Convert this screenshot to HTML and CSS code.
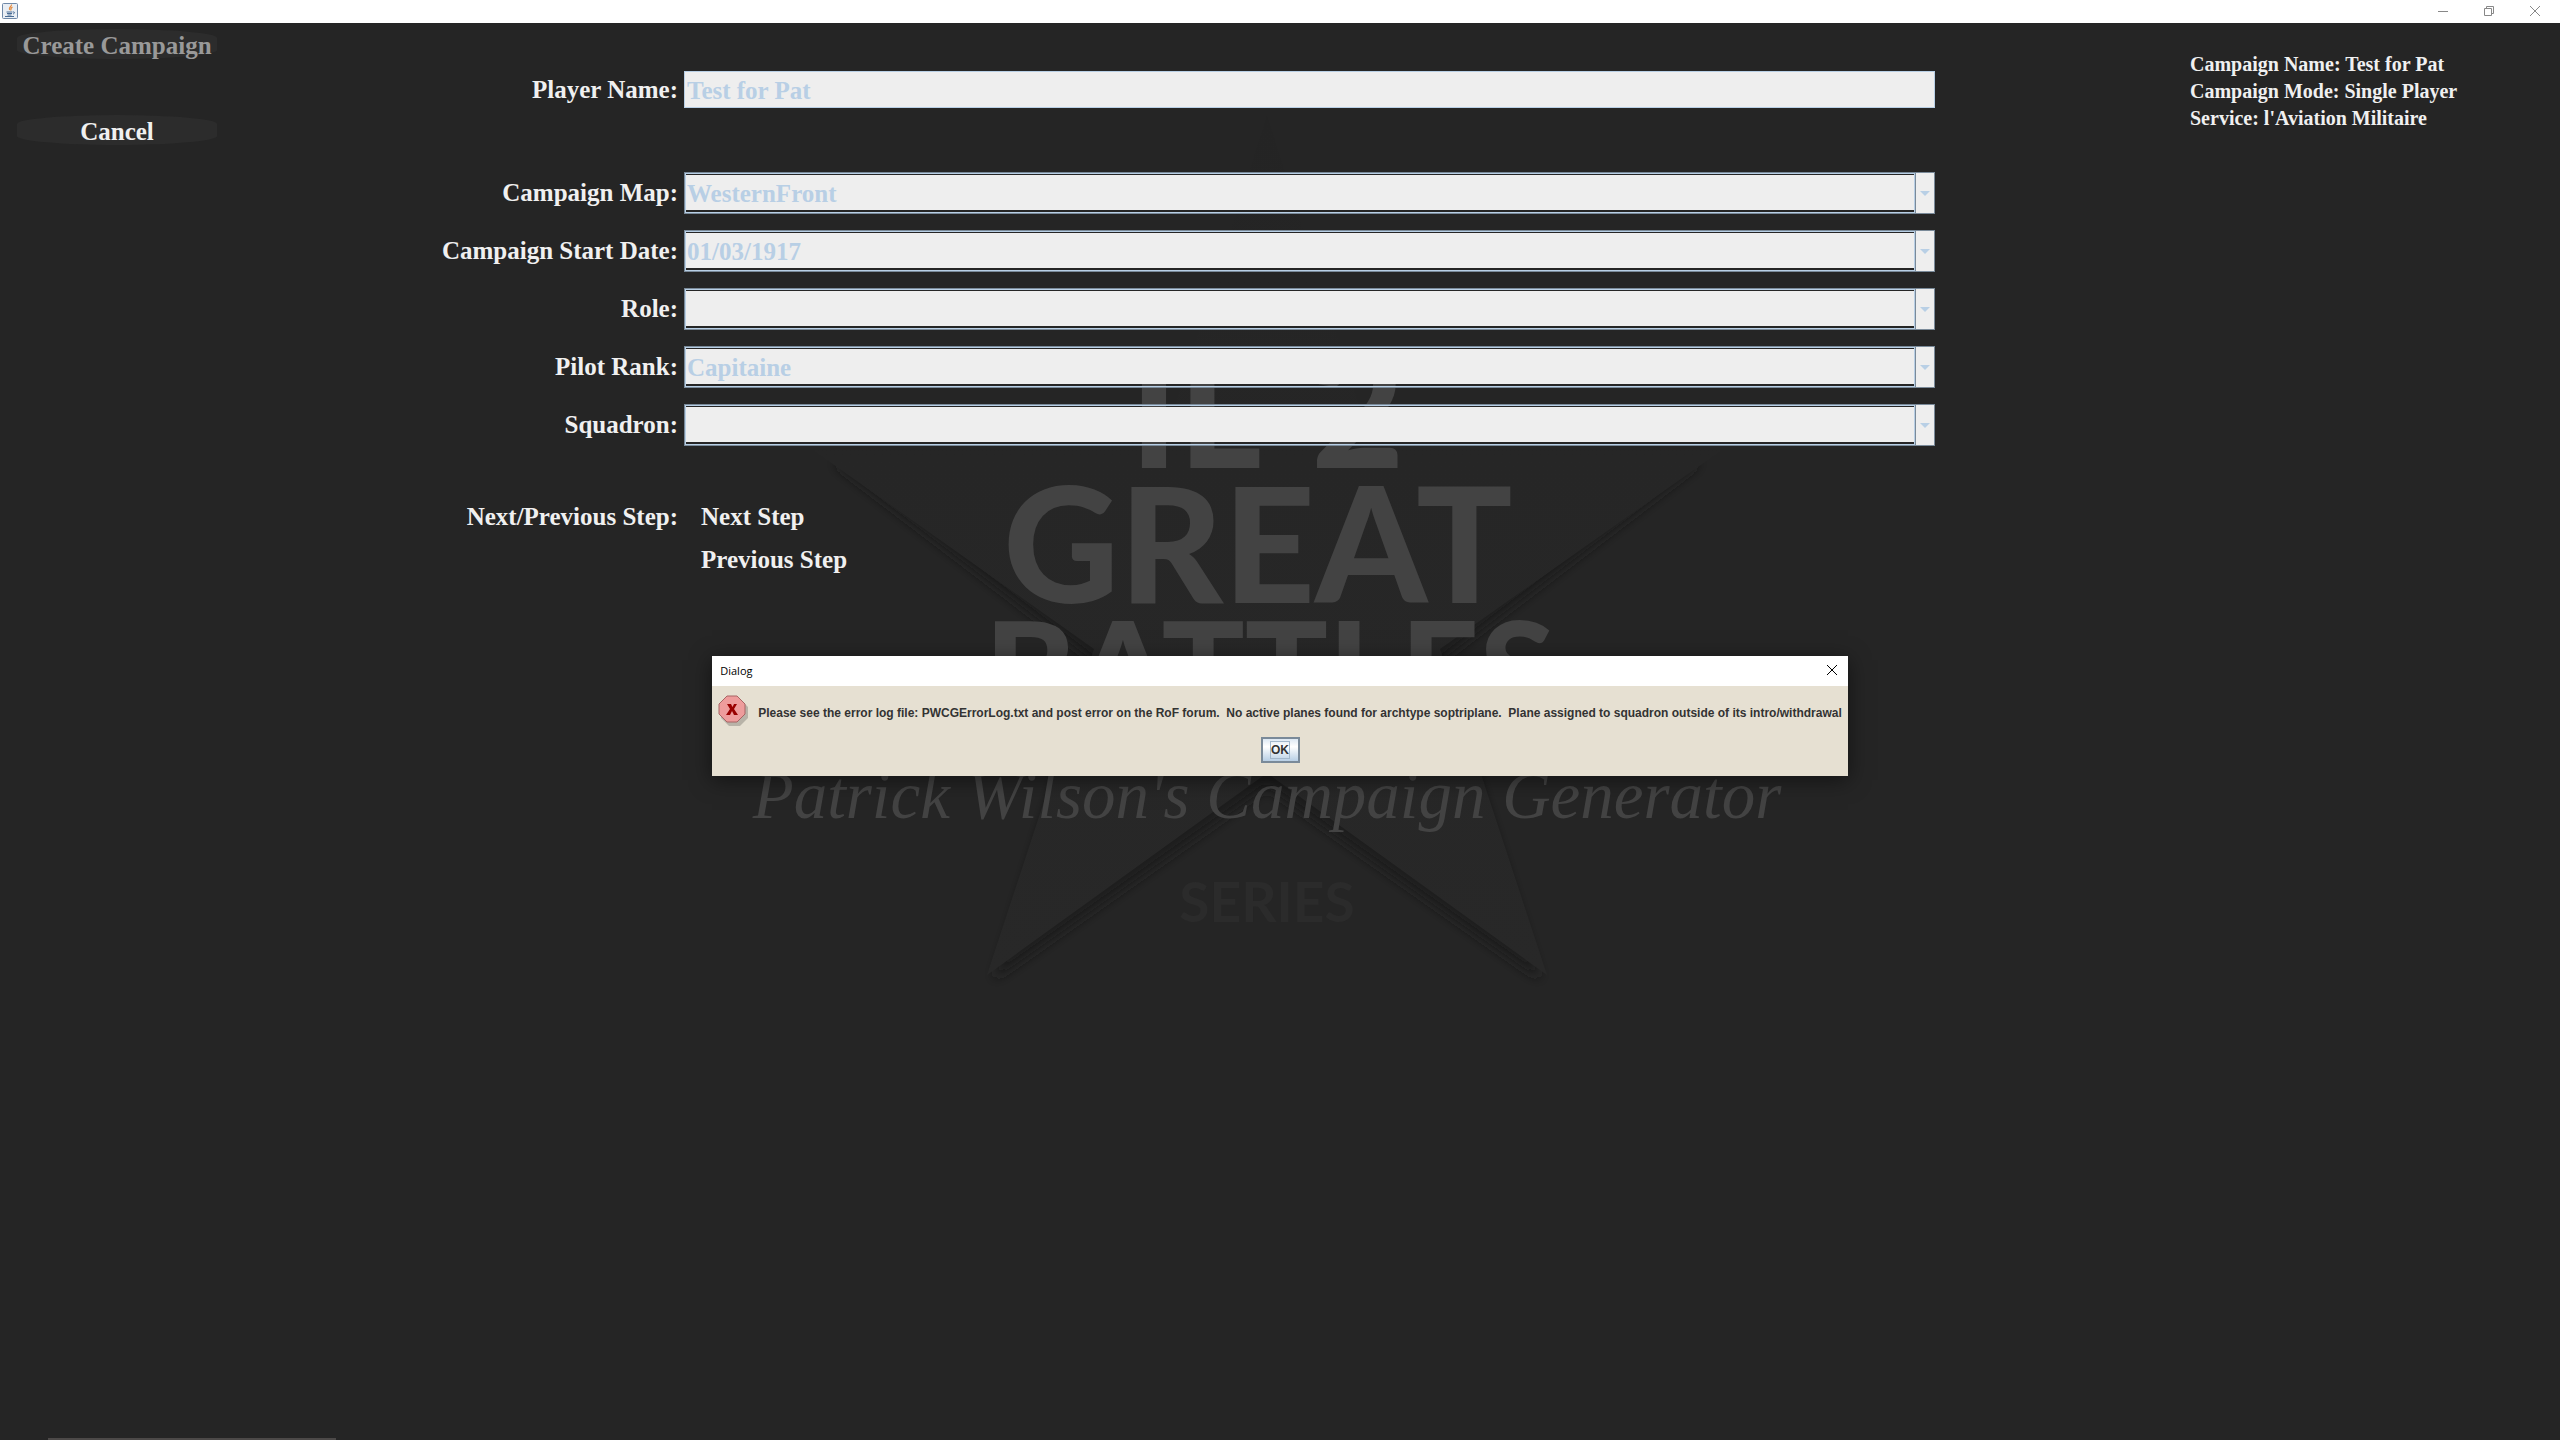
FILE: index.html
```html
<!DOCTYPE html>
<html lang="en">

<head>
    <meta charset="UTF-8">
    <meta name="viewport" content="width=device-width, initial-scale=1.0">
    <title>Create Campaign</title>
    <link rel="stylesheet" href="styles.css">
</head>

<body>
    <header class="titlebar">
        <svg class="app-icon" width="16" height="16" viewBox="0 0 16 16" aria-hidden="true">
            <rect x="0.5" y="0.5" width="15" height="15" rx="1" fill="#e9eef4" stroke="#7089a8" />
            <path d="M9.500 1.500C10 3.500 6 4.500 7.500 7M10.500 4C8.500 5 8.500 6 9 7.500" fill="none" stroke="#e58a3c" stroke-width="1.200" />
            <path d="M4.500 9h6M5 10.500h5M5.500 12h4M3 13.500h9M11 9c2-.5 2 1.500 0 2" fill="none" stroke="#4a6c94" />
        </svg>
        <div class="window-buttons">
            <button type="button" aria-label="Minimize">
                <svg width="12" height="12" viewBox="0 0 12 12"><path d="M1 6.500h10" /></svg>
            </button>
            <button type="button" aria-label="Restore">
                <svg width="12" height="12" viewBox="0 0 12 12"><path d="M1.500 3.500h7v7h-7zM3.500 3.500v-2h7v7h-2" /></svg>
            </button>
            <button type="button" aria-label="Close">
                <svg width="12" height="12" viewBox="0 0 12 12"><path d="M1 1l10 10M11 1L1 11" /></svg>
            </button>
        </div>
    </header>

    <main class="screen">
        <!-- star and game title behind the form -->
        <svg class="backdrop" viewBox="0 0 2560 1417" preserveAspectRatio="xMidYMid slice" aria-hidden="true">
            <defs>
                <filter id="soft" x="-10%" y="-10%" width="120%" height="120%">
                    <feGaussianBlur stdDeviation="6" />
                </filter>
                <linearGradient id="rays" x1="0" y1="0" x2="0" y2="1">
                    <stop offset="0" stop-color="#242424" />
                    <stop offset="0.400" stop-color="#262626" />
                    <stop offset="1" stop-color="#282828" />
                </linearGradient>
            </defs>
            <path class="star-shadow" filter="url(#soft)" d="M1267 150L1360 432L1700 440L1440 638L1540 956L1267 764L994 956L1094 638L834 440L1174 432Z" />
            <path fill="url(#rays)" d="M1267 92L1370 417L1722 427L1440 626L1547 952L1267 750L987 952L1094 626L813 427L1164 417Z" />
            <g class="logo">
                <text x="1267" y="445">IL-2</text>
                <text x="1258" y="580">GREAT</text>
                <text class="logo-wide" x="1270" y="698">BATTLES</text>
            </g>
            <text class="logo-script" x="1267" y="795">Patrick Wilson's Campaign Generator</text>
            <text class="logo-series" x="1267" y="899">SERIES</text>
        </svg>

        <nav class="actions">
            <button type="button" class="plate" disabled>Create Campaign</button>
            <button type="button" class="plate">Cancel</button>
        </nav>

        <form class="campaign-form">
            <label for="playerName">Player Name:</label>
            <input type="text" id="playerName" class="player-name" value="Test for Pat" disabled>

            <label for="campaignMap">Campaign Map:</label>
            <div class="combo">
                <select id="campaignMap" disabled>
                    <option>WesternFront</option>
                </select>
                <span class="arrow"></span>
            </div>

            <label for="startDate">Campaign Start Date:</label>
            <div class="combo">
                <select id="startDate" disabled>
                    <option>01/03/1917</option>
                </select>
                <span class="arrow"></span>
            </div>

            <label for="role">Role:</label>
            <div class="combo">
                <select id="role" disabled>
                    <option></option>
                </select>
                <span class="arrow"></span>
            </div>

            <label for="pilotRank">Pilot Rank:</label>
            <div class="combo">
                <select id="pilotRank" disabled>
                    <option>Capitaine</option>
                </select>
                <span class="arrow"></span>
            </div>

            <label for="squadron">Squadron:</label>
            <div class="combo">
                <select id="squadron" disabled>
                    <option></option>
                </select>
                <span class="arrow"></span>
            </div>

            <span class="steps-label">Next/Previous Step:</span>
            <div class="steps">
                <button type="button">Next Step</button>
                <button type="button">Previous Step</button>
            </div>
        </form>

        <aside class="summary">
            <p>Campaign Name: Test for Pat</p>
            <p>Campaign Mode: Single Player</p>
            <p>Service: l'Aviation Militaire</p>
        </aside>
    </main>

    <div class="bottom-edge"></div>

    <div class="overlay">
        <dialog class="error-dialog" open aria-labelledby="dialogTitle">
            <div class="dialog-title">
                <span id="dialogTitle">Dialog</span>
                <button type="button" aria-label="Close dialog">
                    <svg width="12" height="12" viewBox="0 0 12 12"><path d="M1 1l10 10M11 1L1 11" /></svg>
                </button>
            </div>
            <div class="dialog-body">
                <svg class="error-icon" width="32" height="32" viewBox="0 0 32 32" aria-hidden="true">
                    <path class="icon-shadow" d="M11 4h11l8 8v11l-8 8H11l-8-8V12z" />
                    <path d="M9 1h10l8 8v10l-8 8H9l-8-8V9z" fill="#ee9c9c" stroke="#a86464" />
                    <path d="M9 9h4l1.500 3L16 9h3l-3 5 4 6h-4l-2-4-2 4H8l4-6z" fill="#990000" />
                </svg>
                <p>Please see the error log file: PWCGErrorLog.txt and post error on the RoF forum.  No active planes found for archtype soptriplane.  Plane assigned to squadron outside of its intro/withdrawal</p>
            </div>
            <div class="dialog-buttons">
                <button type="button" class="ok"><span>OK</span></button>
            </div>
        </dialog>
    </div>
</body>

</html>
```

FILE: styles.css
```css
* {
    box-sizing: border-box;
}

body {
    margin: 0;
    min-height: 100vh;
    display: flex;
    flex-direction: column;
    position: relative;
    background: #252525;
    color: #f0f0f0;
    font-family: "Liberation Serif", "Times New Roman", serif;
    font-size: 25px;
    font-weight: bold;
}

button {
    margin: 0;
    padding: 0;
    border: none;
    background: none;
    color: inherit;
    font: inherit;
}

p {
    margin: 0;
}

/* window title bar */
.titlebar {
    display: flex;
    justify-content: space-between;
    align-items: center;
    height: 23px;
    padding: 0 2px 2px;
    background: #fff;
}

.app-icon {
    display: block;
}

.window-buttons {
    display: flex;
}

.window-buttons button {
    display: flex;
    justify-content: center;
    align-items: center;
    width: 46px;
    height: 20px;
}

.window-buttons path {
    fill: none;
    stroke: #888;
}

/* main screen */
.screen {
    flex: 1;
    display: grid;
    grid-template-columns: 234px 1fr 370px;
    align-items: start;
    position: relative;
    overflow: hidden;
}

.backdrop {
    position: absolute;
    top: 0;
    left: 0;
    width: 100%;
    height: 100%;
}

.star-shadow {
    fill: #1f1f1f;
}

.logo {
    fill: #434343;
    font-family: Lato, "Open Sans", sans-serif;
    font-size: 160px;
    font-weight: 900;
    text-anchor: middle;
}

.logo-wide {
    font-size: 138px;
}

.logo-script {
    fill: #434343;
    font-family: "Brush Script MT", "Liberation Serif", serif;
    font-size: 67px;
    font-style: italic;
    font-weight: normal;
    text-anchor: middle;
}

.logo-series {
    fill: #2b2b2b;
    font-family: Lato, "Open Sans", sans-serif;
    font-size: 55px;
    font-weight: bold;
    text-anchor: middle;
}

.actions,
.campaign-form,
.summary {
    position: relative;
}

.actions {
    display: flex;
    flex-direction: column;
    gap: 56px;
    padding: 6px 17px;
}

.plate {
    height: 30px;
    background: #2c2c2c;
    border-radius: 50% / 30%;
    line-height: 30px;
    padding-top: 2px;
}

.plate:disabled {
    color: #999;
}

/* form */
.campaign-form {
    display: grid;
    grid-template-columns: 450fr 1251fr 255fr;
    row-gap: 16px;
    align-items: center;
    padding-top: 48px;
}

.campaign-form label,
.steps-label {
    grid-column: 1;
    padding-right: 6px;
    text-align: right;
}

.campaign-form label {
    line-height: 42px;
}

.campaign-form label:first-child,
.player-name {
    margin-bottom: 48px;
}

.campaign-form label:first-child {
    line-height: 37px;
}

.player-name {
    grid-column: 2;
    width: 100%;
    height: 37px;
    padding: 2px 2px 0;
    border: 1px solid #b8cfe5;
    background: #eee;
    color: #b8cfe5;
    font: inherit;
}

.combo {
    grid-column: 2;
    display: flex;
    height: 42px;
    border: 1px solid #7a8a99;
}

.combo select {
    flex: 1;
    appearance: none;
    margin: 0;
    padding: 0 1px;
    border: 1px solid #b8cfe5;
    border-radius: 0;
    background: linear-gradient(#eee, #eee) 0 1px / 100% 35px no-repeat;
    color: #b8cfe5;
    font: inherit;
    opacity: 1;
}

.arrow {
    display: flex;
    justify-content: center;
    align-items: center;
    width: 19px;
    border-left: 1px solid #7a8a99;
    background: #eee;
}

.arrow::before {
    content: "";
    border: 5px solid transparent;
    border-top-color: #b8cfe5;
    border-bottom: none;
}

.steps-label {
    align-self: start;
    margin-top: 33px;
    line-height: 43px;
}

.steps {
    grid-column: 2;
    display: flex;
    flex-direction: column;
    align-items: flex-start;
    margin-top: 33px;
    padding-left: 17px;
}

.steps button {
    line-height: 43px;
}

.summary {
    padding-top: 28px;
    font-size: 20px;
    line-height: 27px;
}

.bottom-edge {
    position: absolute;
    bottom: 0;
    left: 48px;
    width: 288px;
    height: 2px;
    background: #4c4948;
}

/* error dialog */
.overlay {
    position: absolute;
    top: 0;
    right: 0;
    bottom: 0;
    left: 0;
    display: flex;
    justify-content: center;
    align-items: center;
    padding-bottom: 8px;
}

.error-dialog {
    position: static;
    margin: 0;
    padding: 0;
    border: none;
    background: #e6e0d2;
    box-shadow: 0 4px 20px rgba(0, 0, 0, 0.5);
    color: #333;
    font-family: "Liberation Sans", Arial, sans-serif;
    font-size: 12px;
}

.dialog-title {
    display: flex;
    justify-content: space-between;
    align-items: center;
    height: 30px;
    padding: 0 8px 2px;
    background: #fff;
    color: #000;
    font-family: "Open Sans", "Noto Sans", sans-serif;
    font-size: 11px;
    font-weight: normal;
}

.dialog-title button {
    display: flex;
    padding: 2px;
}

.dialog-title path {
    fill: none;
    stroke: #000;
}

.dialog-body {
    display: flex;
    align-items: flex-start;
    gap: 8px;
    padding: 9px 6px 0;
}

.dialog-body p {
    padding-top: 10px;
    line-height: 16px;
    white-space: pre;
}

.icon-shadow {
    fill: #000;
    opacity: 0.2;
}

.dialog-buttons {
    display: flex;
    justify-content: center;
    padding: 10px 0 13px;
}

.ok {
    width: 39px;
    height: 26px;
    border: 2px solid #7a8a99;
    background: linear-gradient(#dde8f3, #fff 35%, #b8cfe5);
}

.ok span {
    display: inline-block;
    border: 1px solid #a3b8cc;
    line-height: 16px;
}
```
